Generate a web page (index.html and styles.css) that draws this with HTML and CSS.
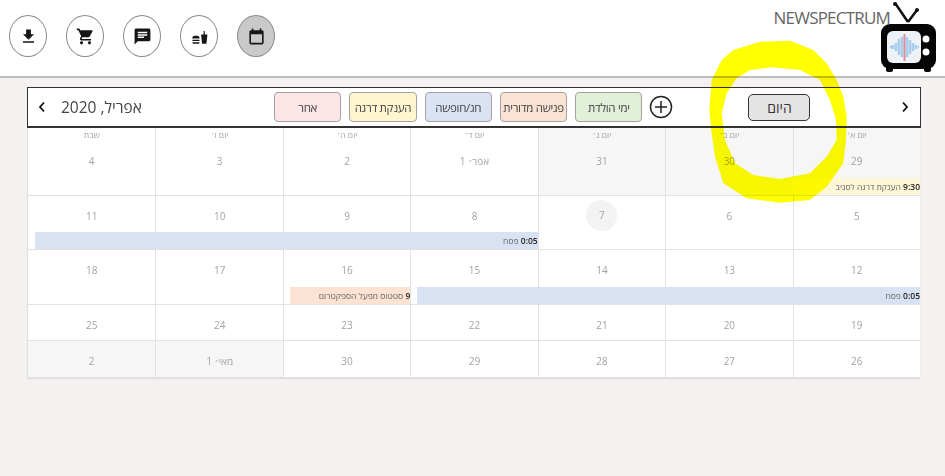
FILE: index.html
```html
<!DOCTYPE html>
<html lang="he">
<head>
<meta charset="utf-8">
<title>לוח שנה</title>
<link rel="stylesheet" href="styles.css">
</head>
<body>
<div class="page">
  <header class="topbar">
    <nav class="nav">
      <span class="nav-btn"><svg viewBox="0 0 24 24"><path d="M19 9h-4V3H9v6H5l7 7 7-7zM5 18v2h14v-2H5z"/></svg></span>
      <span class="nav-btn"><svg viewBox="0 0 24 24"><path d="M7 18c-1.100 0-1.990.9-1.990 2S5.900 22 7 22s2-.9 2-2-.9-2-2-2zM1 2v2h2l3.600 7.590-1.350 2.450c-.160.280-.250.610-.250.960 0 1.100.9 2 2 2h12v-2H7.420c-.140 0-.250-.110-.250-.250l.030-.120.9-1.630h7.450c.750 0 1.410-.410 1.750-1.030l3.580-6.490A1 1 0 0 0 20 4H5.210l-.940-2H1zm16 16c-1.100 0-1.990.9-1.990 2s.890 2 1.990 2 2-.9 2-2-.9-2-2-2z"/></svg></span>
      <span class="nav-btn"><svg viewBox="0 0 24 24"><path d="M20 2H4c-1.100 0-1.990.9-1.990 2L2 22l4-4h14c1.100 0 2-.9 2-2V4c0-1.100-.9-2-2-2zM6 9h12v2H6V9zm8 5H6v-2h8v2zm4-6H6V6h12v2z"/></svg></span>
      <span class="nav-btn"><svg viewBox="0 0 24 24"><path d="M14 9.500h3.200V5h1.500v4.500H22L20.800 21h-5.600zM3 13.500c0-1.700 1.500-2.500 4.500-2.500s4.500.8 4.500 2.500V14.500H3zM3 16h9v1.800H3zM3 19.200h9V20c0 .6-.4 1-1 1H4c-.6 0-1-.4-1-1z"/></svg></span>
      <span class="nav-btn is-active"><svg viewBox="0 0 24 24"><path d="M19 4h-1V2h-2v2H8V2H6v2H5c-1.100 0-2 .9-2 2v14c0 1.100.9 2 2 2h14c1.100 0 2-.9 2-2V6c0-1.100-.9-2-2-2zm0 16H5V9h14v11z"/></svg></span>
    </nav>
    <div class="brand">
      <span class="brand-name">NEWSPECTRUM</span>
      <svg class="brand-tv" viewBox="0 0 58 72">
        <path d="M15 2l13 19M37 9l-9 12" stroke="#111" stroke-width="2.500" fill="none"/>
        <circle cx="15" cy="3" r="2" fill="#111"/><circle cx="37" cy="9" r="2" fill="#111"/>
        <rect x="1" y="23" width="55" height="45" rx="9" fill="#050505"/>
        <rect x="6" y="66" width="7" height="5" rx="2" fill="#050505"/>
        <rect x="44" y="66" width="7" height="5" rx="2" fill="#050505"/>
        <rect x="7" y="30" width="34" height="32" rx="6" fill="#eef3f8"/>
        <path d="M10 46h2M13 44v4M16 42v8M19 38v16M22 36v20M27 36v20M30 39v14M33 42v8M36 44v4M39 46h-1" stroke="#a9cdea" stroke-width="2.600"/>
        <path d="M24.500 33v27" stroke="#dc8f97" stroke-width="2"/>
        <circle cx="46" cy="38" r="3.500" fill="#fff"/><circle cx="46" cy="51" r="3.500" fill="#fff"/>
      </svg>
    </div>
  </header>

  <main class="calendar">
    <div class="toolbar">
      <svg class="chev" viewBox="0 0 8 12"><path d="M6 1.500L2 6l4 4.500"/></svg>
      <h1 class="month">אפריל, 2020</h1>
      <div class="legend">
        <span class="tag tag-pink">אחר</span>
        <span class="tag tag-yellow">הענקת דרגה</span>
        <span class="tag tag-blue">חג/חופשה</span>
        <span class="tag tag-orange">פגישה מדורית</span>
        <span class="tag tag-green">ימי הולדת</span>
      </div>
      <svg class="plus" viewBox="0 0 24 24"><circle cx="12" cy="12" r="10.500"/><path d="M12 6v12M6 12h12"/></svg>
      <button class="today">היום</button>
      <svg class="chev chev-next" viewBox="0 0 8 12"><path d="M2 1.500L6 6l-4 4.500"/></svg>
    </div>

    <div class="weeks" dir="rtl">
      <section class="week week-1">
        <div class="day is-off"><small>יום א׳</small><span>29</span></div>
        <div class="day is-off"><small>יום ב׳</small><span>30</span></div>
        <div class="day is-off"><small>יום ג׳</small><span>31</span></div>
        <div class="day"><small>יום ד׳</small><span>אפר׳ 1</span></div>
        <div class="day"><small>יום ה׳</small><span>2</span></div>
        <div class="day"><small>יום ו׳</small><span>3</span></div>
        <div class="day"><small>שבת</small><span>4</span></div>
        <div class="event ev-yellow ev-1"><b>9:30</b> הענקת דרגה לסגיב</div>
      </section>
      <section class="week week-2">
        <div class="day"><span>5</span></div>
        <div class="day"><span>6</span></div>
        <div class="day"><span class="now">7</span></div>
        <div class="day"><span>8</span></div>
        <div class="day"><span>9</span></div>
        <div class="day"><span>10</span></div>
        <div class="day"><span>11</span></div>
        <div class="event ev-blue ev-2"><b>0:05</b> פסח</div>
      </section>
      <section class="week week-3">
        <div class="day"><span>12</span></div>
        <div class="day"><span>13</span></div>
        <div class="day"><span>14</span></div>
        <div class="day"><span>15</span></div>
        <div class="day"><span>16</span></div>
        <div class="day"><span>17</span></div>
        <div class="day"><span>18</span></div>
        <div class="event ev-blue ev-3"><b>0:05</b> פסח</div>
        <div class="event ev-orange ev-4"><b>9</b> סטטוס מפעל הספקטרום</div>
      </section>
      <section class="week week-4">
        <div class="day"><span>19</span></div>
        <div class="day"><span>20</span></div>
        <div class="day"><span>21</span></div>
        <div class="day"><span>22</span></div>
        <div class="day"><span>23</span></div>
        <div class="day"><span>24</span></div>
        <div class="day"><span>25</span></div>
      </section>
      <section class="week week-5">
        <div class="day"><span>26</span></div>
        <div class="day"><span>27</span></div>
        <div class="day"><span>28</span></div>
        <div class="day"><span>29</span></div>
        <div class="day"><span>30</span></div>
        <div class="day is-off"><span>מאי׳ 1</span></div>
        <div class="day is-off"><span>2</span></div>
      </section>
    </div>
  </main>
</div>

<svg class="scribble" viewBox="0 0 795 630">
  <path fill-rule="evenodd" d="M240 125L330 122L400 150L440 190L470 240L490 290L500 350L498 420L490 490L440 560L390 600L300 608L200 595L130 550L105 470L95 400L88 330L95 240L125 180L160 150Z M275 202L210 210L170 235L140 280L125 340L135 420L165 490L220 525L300 537L390 520L440 470L470 420L468 360L450 300L420 240L360 210Z"/>
</svg>
</body>
</html>
```
FILE: styles.css
```css
* { box-sizing: border-box; }
html, body { margin: 0; height: 100%; }
body {
  background: #f5f1f0;
  font-family: "Open Sans", "DejaVu Sans", sans-serif;
  overflow: hidden;
  position: relative;
}
.page { filter: blur(0.35px); }

.topbar {
  height: 78px;
  background: #fff;
  border-bottom: 2px solid #bdbdbd;
  display: flex;
  justify-content: space-between;
  padding: 15px 7px 0 9px;
}
.nav { display: flex; gap: 19px; align-items: flex-start; }
.nav-btn {
  width: 38px;
  height: 42px;
  border: 1px solid #8a8a8a;
  border-radius: 50%;
  background: #fff;
  display: flex;
  align-items: center;
  justify-content: center;
}
.nav-btn svg { width: 19px; height: 19px; fill: #161616; }
.nav-btn.is-active { background: #c9c9c9; }

.brand { display: flex; align-items: flex-start; margin-top: -14px; }
.brand-name {
  font-size: 17px;
  color: #666;
  letter-spacing: -0.8px;
  margin-top: 5px;
  margin-right: -10px;
}
.brand-tv { width: 58px; height: 72px; }

.calendar { padding: 9px 24px 0 27px; }
.toolbar {
  height: 41px;
  background: #fff;
  border: 1.500px solid #333;
  border-bottom-width: 2px;
  display: flex;
  align-items: center;
  padding-left: 10px;
}
.chev { width: 8px; height: 12px; fill: none; stroke: #111; stroke-width: 1.800; }
.month {
  margin: 0 0 0 15px;
  width: 81px;
  font-size: 15.500px;
  font-weight: 400;
  color: #444;
  white-space: nowrap;
}
.legend { display: flex; gap: 8px; margin-left: 132px; }
.tag {
  width: 67.300px;
  height: 30px;
  border: 1px solid #a2a2a2;
  border-radius: 4px;
  font-size: 11.500px;
  letter-spacing: -0.3px;
  color: #444;
  display: flex;
  align-items: center;
  justify-content: center;
  white-space: nowrap;
}
.tag-pink { background: #fde4e6; }
.tag-yellow { background: #fff6cf; }
.tag-blue { background: #dae3f3; }
.tag-orange { background: #fbe3d4; }
.tag-green { background: #e2efd9; }
.plus { width: 24px; height: 24px; margin-left: 7px; fill: none; stroke: #222; stroke-width: 1.500; }
.today {
  width: 62px;
  height: 27px;
  margin-left: 75px;
  padding: 0;
  border: 1px solid #333;
  border-radius: 5px;
  background: #e4e4e4;
  color: #333;
  font: 400 14px "Open Sans", "DejaVu Sans", sans-serif;
}
.chev-next { margin-left: 91px; }

.weeks {
  width: 893px;
  border-left: 1px solid #e2e2e2;
  box-shadow: 0 1px 1px #ddd;
}
.week {
  display: grid;
  grid-template-columns: repeat(7, minmax(0, 1fr));
  grid-template-rows: 1fr auto;
  border-bottom: 1px solid #e2e2e2;
  background: #fff;
}
.week-1 { height: 68px; }
.week-2 { height: 54px; }
.week-3 { height: 55px; }
.week-4 { height: 36px; }
.week-5 { height: 37px; }

.day {
  grid-row: 1 / 3;
  border-left: 1px solid #e2e2e2;
  text-align: center;
  font-size: 10px;
  color: #a3a3a3;
  display: flex;
  flex-direction: column;
  align-items: center;
  padding-top: 13px;
}
.day:nth-child(1) { grid-column: 1; }
.day:nth-child(2) { grid-column: 2; }
.day:nth-child(3) { grid-column: 3; }
.day:nth-child(4) { grid-column: 4; }
.day:nth-child(5) { grid-column: 5; }
.day:nth-child(6) { grid-column: 6; }
.day:nth-child(7) { grid-column: 7; border-left: 0; }
.week-1 .day { padding-top: 0; }
.day.is-off { background: #f6f6f6; }
.day small { font-size: 8.500px; line-height: 14px; margin-bottom: 12px; }
.day span { line-height: 14px; }
.day span.now {
  width: 31px;
  height: 31px;
  margin-top: -9px;
  line-height: 31px;
  border-radius: 50%;
  background: #f3f3f3;
}

.event {
  grid-row: 2;
  height: 17px;
  z-index: 1;
  font-size: 8.500px;
  line-height: 17px;
  color: #666;
  white-space: nowrap;
}
.event b { color: #222; font-weight: 600; }
.ev-yellow { background: #fdf7d8; }
.ev-blue { background: #d9e2f2; }
.ev-orange { background: #fbe2d3; }
.ev-1 { grid-column: 1; }
.ev-2 { grid-column: 4 / 8; margin-left: 7px; }
.ev-3 { grid-column: 1 / 5; margin-left: 7px; }
.ev-4 { grid-column: 5; margin-left: 7px; }

.scribble {
  position: absolute;
  top: 0;
  left: 680px;
  width: 265px;
  height: 210px;
  fill: #ffff00;
  mix-blend-mode: multiply;
}
```
